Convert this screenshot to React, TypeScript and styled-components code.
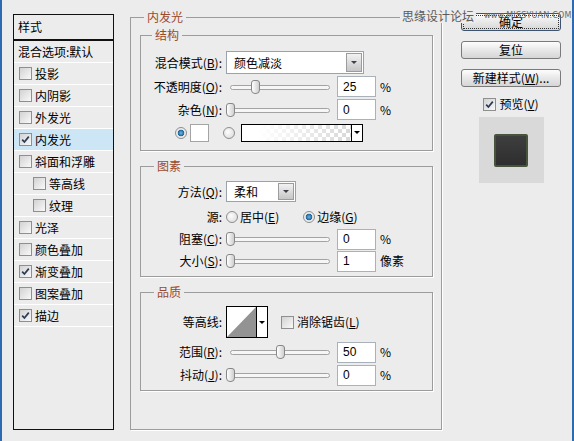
import React from "react";
import styled, { createGlobalStyle } from "styled-components";

const GlobalStyle = createGlobalStyle`
  * { box-sizing: border-box; }
  html, body { margin: 0; padding: 0; background: #ececec; }
  body {
    font-family: "Noto Sans CJK SC", "Liberation Sans", sans-serif;
    font-size: 12px;
    line-height: 14px;
    color: #000;
  }
`;

const Window = styled.div`
  position: relative;
  width: 574px;
  height: 441px;
  border-left: 2px solid #2d6bb0;
  border-right: 2px solid #2d6bb0;
  background: #ececec;
  display: flex;
  align-items: flex-start;
  padding: 10px 0 0 11px;
  overflow: hidden;
`;

/* ---------- left style list ---------- */

const StyleList = styled.div`
  margin-top: 4px;
  width: 101px;
  height: 416px;
  border: 1px solid #111;
  display: flex;
  flex-direction: column;
`;

const ListHeader = styled.div`
  height: 26px;
  line-height: 24px;
  padding-left: 4px;
  border-bottom: 2px solid #111;
`;

const ListItem = styled.div<{ $selected?: boolean; $indent?: number }>`
  height: 22px;
  display: flex;
  align-items: center;
  padding-left: ${(p) => p.$indent ?? 5}px;
  border-bottom: 1px solid #fff;
  background: ${(p) => (p.$selected ? "#cce6f5" : "transparent")};
  white-space: nowrap;
`;

const ItemText = styled.span`
  margin-left: 3px;
  white-space: nowrap;
`;

const BoxMark = styled.span`
  display: inline-flex;
  align-items: center;
  justify-content: center;
  width: 13px;
  height: 13px;
  flex-shrink: 0;
  border: 1px solid #8f8f8f;
  background: linear-gradient(135deg, #d2d2d2, #f9f9f9);
`;

function Check({ checked }: { checked?: boolean }) {
  return (
    <BoxMark>
      {checked && (
        <svg width="9" height="9" viewBox="0 0 9 9">
          <path d="M1.2 4.6 L3.4 7 L7.8 1.6" stroke="#2b3b55" strokeWidth="1.7" fill="none" />
        </svg>
      )}
    </BoxMark>
  );
}

const Radio = styled.span<{ $on?: boolean }>`
  display: inline-block;
  width: 12px;
  height: 12px;
  flex-shrink: 0;
  border-radius: 50%;
  border: 1px solid #8c8e90;
  background: ${(p) =>
    p.$on
      ? "radial-gradient(circle at 50% 50%, #6fb6e2 0, #1c6598 3px, #e6e6e6 3.6px, #fbfbfb 100%)"
      : "radial-gradient(circle at 40% 40%, #fdfdfd, #d6d6d6)"};
`;

/* ---------- group boxes ---------- */

const MainGroup = styled.fieldset`
  margin: 0 0 0 16px;
  width: 312px;
  height: 420px;
  padding: 4px 8px 0 9px;
  border: 1px solid #9c9c9c;
  box-shadow: 1px 1px 0 #fff;
  display: flex;
  flex-direction: column;
  gap: 8px;
  min-width: 0;
`;

const Legend = styled.legend<{ $ml?: number }>`
  padding: 0 3px;
  margin-left: ${(p) => p.$ml ?? 4}px;
  line-height: 14px;
  color: #9a4a2c;
`;

const Group = styled.fieldset<{ $pt: number; $pb: number }>`
  margin: 0;
  padding: ${(p) => p.$pt}px 0 ${(p) => p.$pb}px 0;
  border: 1px solid #9c9c9c;
  box-shadow: 1px 1px 0 #fff;
  display: flex;
  flex-direction: column;
  min-width: 0;
`;

const Row = styled.div<{ $h: number; $mt?: number; $pl?: number }>`
  display: flex;
  align-items: center;
  height: ${(p) => p.$h}px;
  margin-top: ${(p) => p.$mt ?? 2}px;
  padding-left: ${(p) => p.$pl ?? 0}px;
  white-space: nowrap;
  &:first-of-type {
    margin-top: 0;
  }
`;

const Label = styled.span`
  width: 81px;
  flex-shrink: 0;
  margin-right: 4px;
  text-align: right;
`;

const Key = styled.u`
  text-underline-offset: 1px;
`;

/* ---------- controls ---------- */

const Select = styled.div<{ $w: number; $h: number }>`
  display: flex;
  width: ${(p) => p.$w}px;
  height: ${(p) => p.$h}px;
  border: 1px solid #9aa3ad;
  background: #fff;
  padding: 1px;
`;

const SelectText = styled.span`
  flex: 1;
  display: flex;
  align-items: center;
  padding-left: 6px;
`;

const SelectButton = styled.span`
  width: 16px;
  display: flex;
  align-items: center;
  justify-content: center;
  border: 1px solid #9c9c9c;
  background: linear-gradient(#f2f2f2, #c6c6c6);
`;

const Caret = styled.span<{ $color?: string }>`
  width: 0;
  height: 0;
  border-left: 3px solid transparent;
  border-right: 3px solid transparent;
  border-top: 3px solid ${(p) => p.$color ?? "#3a3f48"};
`;

const Slider = styled.div`
  position: relative;
  width: 100px;
  height: 14px;
  margin: 0 7px 0 4px;
  flex-shrink: 0;
`;

const Track = styled.div`
  position: absolute;
  left: 0;
  right: 0;
  top: 5px;
  height: 5px;
  border-radius: 3px;
  border: 1px solid #a3a3a3;
  background: #f6f6f6;
`;

const Thumb = styled.div`
  position: absolute;
  top: 0;
  width: 9px;
  height: 14px;
  margin-left: -4px;
  border: 1px solid #878787;
  border-radius: 3px 3px 4px 4px;
  background: linear-gradient(to right, #ffffff, #cfcfcf);
`;

function Range({ value }: { value: number }) {
  return (
    <Slider>
      <Track />
      <Thumb style={{ left: `${value}%` }} />
    </Slider>
  );
}

const NumField = styled.input`
  width: 39px;
  height: 21px;
  flex-shrink: 0;
  border: 1px solid #a9b1ba;
  background: #fff;
  padding: 0 0 0 5px;
  margin: 0;
  font-family: "Liberation Sans", sans-serif;
  font-size: 12px;
  color: #000;
  outline: none;
`;

const Unit = styled.span`
  margin-left: 4px;
`;

const Swatch = styled.span`
  width: 19px;
  height: 18px;
  margin: 0 14px 0 3px;
  border: 1px solid #a4a4a4;
  background: #fff;
`;

const GradientBox = styled.div`
  display: flex;
  width: 122px;
  height: 18px;
  margin-left: 6px;
  border: 1px solid #000;
`;

const GradientFill = styled.span`
  flex: 1;
  background: linear-gradient(to right, #fff 15%, rgba(255, 255, 255, 0) 100%),
    repeating-conic-gradient(#d8d8d8 0 25%, #ffffff 0 50%) 0 0 / 8px 8px;
`;

const ArrowCell = styled.span`
  width: 11px;
  display: flex;
  align-items: center;
  justify-content: center;
  border-left: 1px solid #000;
  background: #fff;
`;

const ContourBox = styled.div`
  display: flex;
  width: 42px;
  height: 32px;
  border: 1px solid #000;
  background: #fff;
`;

const ContourPlot = styled.span`
  width: 29px;
  display: flex;
`;

const RadioLabel = styled.span<{ $gap?: number }>`
  margin: 0 ${(p) => p.$gap ?? 0}px 0 2px;
`;

const CheckOption = styled.span<{ $ml?: number }>`
  display: flex;
  align-items: center;
  margin-left: ${(p) => p.$ml ?? 0}px;
`;

/* ---------- right column ---------- */

const Side = styled.div`
  margin: 3px 0 0 19px;
  width: 100px;
  display: flex;
  flex-direction: column;
  align-items: center;
`;

const Button = styled.button<{ $primary?: boolean }>`
  width: 100px;
  height: 18px;
  padding: 0;
  font: inherit;
  line-height: 14px;
  color: #000;
  border: 1px solid ${(p) => (p.$primary ? "#3c5470" : "#7a7a7a")};
  border-radius: 3px;
  background: linear-gradient(#fdfdfd, #e8e8e8 50%, #d6d6d6);
  outline: ${(p) => (p.$primary ? "1px dotted #333" : "none")};
  outline-offset: -3px;
  & + & {
    margin-top: 10px;
  }
`;

const PreviewToggle = styled.label`
  display: flex;
  align-items: center;
  height: 14px;
  margin-top: 10px;
`;

const PreviewBox = styled.div`
  margin-top: 6px;
  width: 65px;
  height: 66px;
  background: #d9d9d9;
  display: flex;
  align-items: center;
  justify-content: center;
`;

const PreviewSquare = styled.div`
  width: 34px;
  height: 33px;
  border: 2px solid #46543b;
  border-radius: 2px;
  background: linear-gradient(#3e3e3e, #2e2e2e);
`;

/* ---------- watermark ---------- */

const Watermark = styled.div`
  position: absolute;
  top: 9px;
  left: 398px;
  display: flex;
  align-items: center;
  white-space: nowrap;
  pointer-events: none;
`;

const WatermarkCn = styled.span`
  padding: 0 2px;
  background: #ececec;
  color: #5a5a5a;
  line-height: 14px;
`;

const WatermarkEn = styled.span`
  margin-left: 8px;
  font-family: "DejaVu Sans", sans-serif;
  font-size: 8px;
  letter-spacing: 0.2px;
  color: #6a6a6a;
`;

const styles: { name: string; checked?: boolean; indent?: boolean; selected?: boolean }[] = [
  { name: "投影" },
  { name: "内阴影" },
  { name: "外发光" },
  { name: "内发光", checked: true, selected: true },
  { name: "斜面和浮雕" },
  { name: "等高线", indent: true },
  { name: "纹理", indent: true },
  { name: "光泽" },
  { name: "颜色叠加" },
  { name: "渐变叠加", checked: true },
  { name: "图案叠加" },
  { name: "描边", checked: true },
];

export default function App() {
  return (
    <>
      <GlobalStyle />
      <Window>
        <StyleList>
          <ListHeader>样式</ListHeader>
          <ListItem $indent={4}>混合选项:默认</ListItem>
          {styles.map((s) => (
            <ListItem key={s.name} $selected={s.selected} $indent={s.indent ? 19 : 5}>
              <Check checked={s.checked} />
              <ItemText>{s.name}</ItemText>
            </ListItem>
          ))}
        </StyleList>

        <MainGroup>
          <Legend>内发光</Legend>

          <Group $pt={9} $pb={7}>
            <Legend $ml={11}>结构</Legend>
            <Row $h={23}>
              <Label>
                混合模式(<Key>B</Key>):
              </Label>
              <Select $w={138} $h={23}>
                <SelectText>颜色减淡</SelectText>
                <SelectButton>
                  <Caret />
                </SelectButton>
              </Select>
            </Row>
            <Row $h={21}>
              <Label>
                不透明度(<Key>O</Key>):
              </Label>
              <Range value={25} />
              <NumField readOnly value="25" />
              <Unit>%</Unit>
            </Row>
            <Row $h={21}>
              <Label>
                杂色(<Key>N</Key>):
              </Label>
              <Range value={0} />
              <NumField readOnly value="0" />
              <Unit>%</Unit>
            </Row>
            <Row $h={21} $pl={34}>
              <Radio $on />
              <Swatch />
              <Radio />
              <GradientBox>
                <GradientFill />
                <ArrowCell>
                  <Caret $color="#000" />
                </ArrowCell>
              </GradientBox>
            </Row>
          </Group>

          <Group $pt={8} $pb={5}>
            <Legend $ml={13}>图素</Legend>
            <Row $h={21}>
              <Label>
                方法(<Key>Q</Key>):
              </Label>
              <Select $w={70} $h={21}>
                <SelectText>柔和</SelectText>
                <SelectButton>
                  <Caret />
                </SelectButton>
              </Select>
            </Row>
            <Row $h={22} $mt={4}>
              <Label>源:</Label>
              <Radio />
              <RadioLabel $gap={24}>
                居中(<Key>E</Key>)
              </RadioLabel>
              <Radio $on />
              <RadioLabel>
                边缘(<Key>G</Key>)
              </RadioLabel>
            </Row>
            <Row $h={20} $mt={1}>
              <Label>
                阻塞(<Key>C</Key>):
              </Label>
              <Range value={0} />
              <NumField readOnly value="0" />
              <Unit>%</Unit>
            </Row>
            <Row $h={20}>
              <Label>
                大小(<Key>S</Key>):
              </Label>
              <Range value={0} />
              <NumField readOnly value="1" />
              <Unit>像素</Unit>
            </Row>
          </Group>

          <Group $pt={7} $pb={5}>
            <Legend $ml={13}>品质</Legend>
            <Row $h={32}>
              <Label>等高线:</Label>
              <ContourBox>
                <ContourPlot>
                  <svg width="29" height="30" viewBox="0 0 29 30">
                    <polygon points="0,30 29,0 29,30" fill="#939393" />
                  </svg>
                </ContourPlot>
                <ArrowCell>
                  <Caret $color="#000" />
                </ArrowCell>
              </ContourBox>
              <CheckOption $ml={13}>
                <Check />
                <ItemText>
                  消除锯齿(<Key>L</Key>)
                </ItemText>
              </CheckOption>
            </Row>
            <Row $h={20} $mt={4}>
              <Label>
                范围(<Key>R</Key>):
              </Label>
              <Range value={50} />
              <NumField readOnly value="50" />
              <Unit>%</Unit>
            </Row>
            <Row $h={20} $mt={3}>
              <Label>
                抖动(<Key>J</Key>):
              </Label>
              <Range value={0} />
              <NumField readOnly value="0" />
              <Unit>%</Unit>
            </Row>
          </Group>
        </MainGroup>

        <Side>
          <Button $primary>确定</Button>
          <Button>复位</Button>
          <Button>
            新建样式(<Key>W</Key>)...
          </Button>
          <PreviewToggle>
            <Check checked />
            <ItemText>
              预览(<Key>V</Key>)
            </ItemText>
          </PreviewToggle>
          <PreviewBox>
            <PreviewSquare />
          </PreviewBox>
        </Side>

        <Watermark>
          <WatermarkCn>思缘设计论坛</WatermarkCn>
          <WatermarkEn>www.MISSYUAN.COM</WatermarkEn>
        </Watermark>
      </Window>
    </>
  );
}
